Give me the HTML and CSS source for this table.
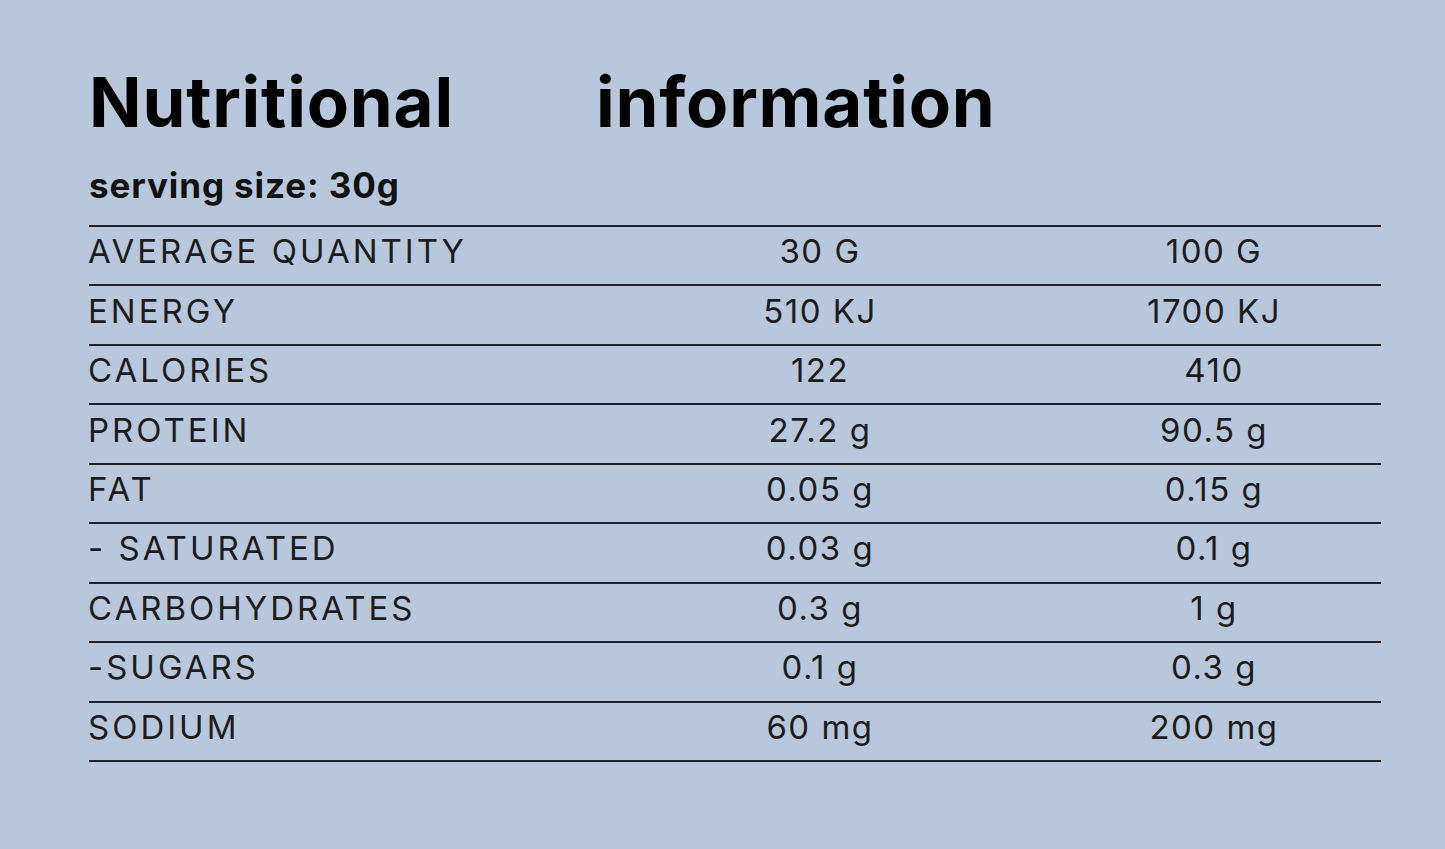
FILE: index.html
```html
<!DOCTYPE html>
<html lang="en">
<head>
<meta charset="utf-8">
<title>Nutritional information</title>
<link rel="stylesheet" href="styles.css">
</head>
<body>
<main class="panel">
  <h1 class="title grid"><span>Nutritional</span><span class="second">information</span></h1>
  <p class="serving">serving size: 30g</p>
  <div class="table">
    <div class="row grid"><span class="label">AVERAGE QUANTITY</span><span class="num">30 G</span><span class="num">100 G</span></div>
    <div class="row grid"><span class="label">ENERGY</span><span class="num">510 KJ</span><span class="num">1700 KJ</span></div>
    <div class="row grid"><span class="label">CALORIES</span><span class="num">122</span><span class="num">410</span></div>
    <div class="row grid"><span class="label">PROTEIN</span><span class="num">27.2 g</span><span class="num">90.5 g</span></div>
    <div class="row grid"><span class="label">FAT</span><span class="num">0.05 g</span><span class="num">0.15 g</span></div>
    <div class="row grid"><span class="label">- SATURATED</span><span class="num">0.03 g</span><span class="num">0.1 g</span></div>
    <div class="row grid"><span class="label">CARBOHYDRATES</span><span class="num">0.3 g</span><span class="num">1 g</span></div>
    <div class="row grid"><span class="label">-SUGARS</span><span class="num">0.1 g</span><span class="num">0.3 g</span></div>
    <div class="row grid last"><span class="label">SODIUM</span><span class="num">60 mg</span><span class="num">200 mg</span></div>
  </div>
</main>
</body>
</html>
```
FILE: styles.css
```css
html, body {
  margin: 0;
  padding: 0;
}
body {
  background: #b8c7db;
  width: 1445px;
  height: 849px;
  overflow: hidden;
  font-family: Inter, "Liberation Sans", sans-serif;
  color: #1c1c1e;
}
.panel {
  padding: 60px 0 0 89px;
  width: 1292px;
}
.grid {
  display: grid;
  grid-template-columns: 504px 454px 334px;
  align-items: center;
}
.title {
  margin: 0;
  font-size: 69px;
  font-weight: 700;
  line-height: 84px;
  color: #000;
  letter-spacing: 0.8px;
}
.title .second {
  margin-left: 3px;
}
.serving {
  margin: 21px 0 0 0;
  font-size: 35px;
  font-weight: 700;
  line-height: 40px;
  color: #111;
  letter-spacing: 0.9px;
}
.table {
  margin-top: 20px;
}
.row {
  box-sizing: border-box;
  height: 59.44px;
  border-top: 2.5px solid #1f2226;
  font-size: 33px;
  line-height: 40px;
  padding-bottom: 9px;
}
.row.last {
  height: 61.94px;
  border-bottom: 2.5px solid #1f2226;
}
.label {
  letter-spacing: 3px;
  margin-left: -1px;
}
.num {
  text-align: center;
  letter-spacing: 1.5px;
}
```
